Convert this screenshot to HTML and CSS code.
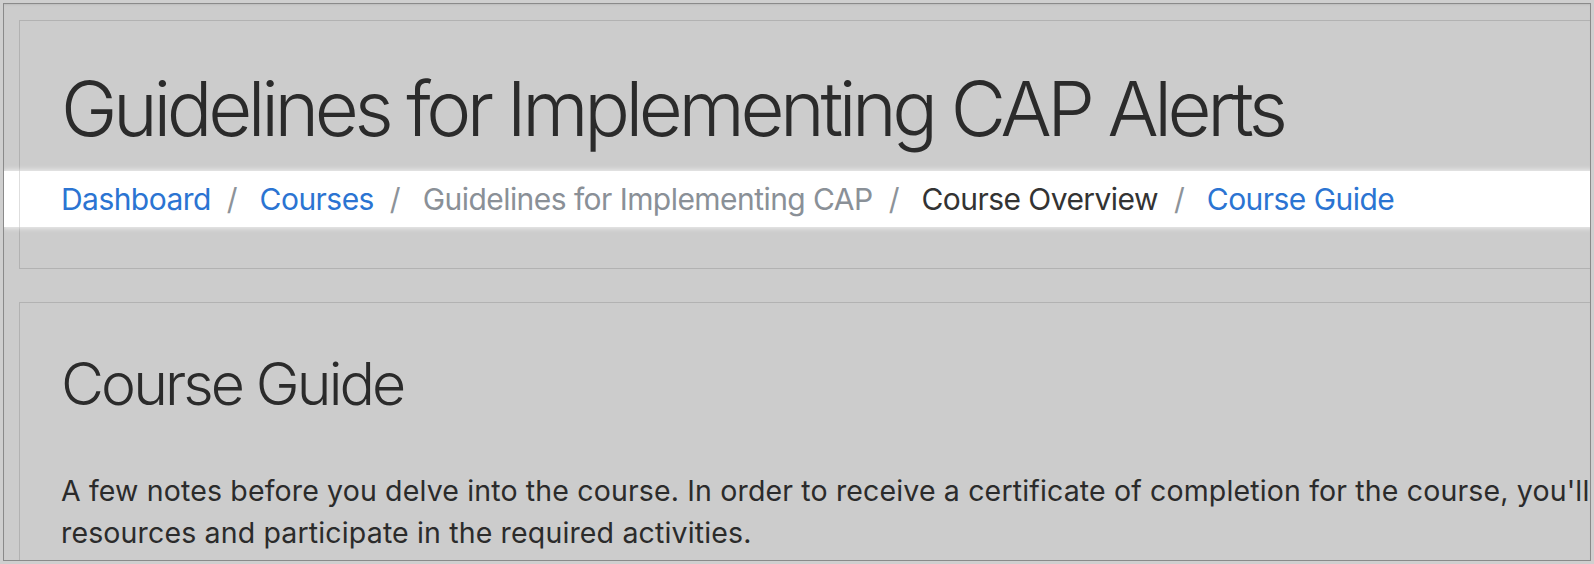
FILE: index.html
```html
<!DOCTYPE html>
<html lang="en">
<head>
<meta charset="utf-8">
<title>Course Guide</title>
<link rel="stylesheet" href="styles.css">
</head>
<body>
<div class="frame">
  <header class="card card-header">
    <h1 class="page-title">Guidelines for Implementing CAP Alerts</h1>
    <nav class="crumbs">
      <a class="crumb link" href="#">Dashboard</a><span class="sep">/</span>
      <a class="crumb link" href="#">Courses</a><span class="sep">/</span>
      <span class="crumb muted">Guidelines for Implementing CAP</span><span class="sep">/</span>
      <span class="crumb dark">Course Overview</span><span class="sep">/</span>
      <a class="crumb link" href="#">Course Guide</a>
    </nav>
  </header>
  <main class="card card-main">
    <h2 class="section-title">Course Guide</h2>
    <p class="intro">A few notes before you delve into the course. In order to receive a certificate of completion for the course, you'll<br>resources and participate in the required activities.</p>
  </main>
</div>
</body>
</html>
```
FILE: styles.css
```css
html, body { margin: 0; padding: 0; }
body {
  background: #cfcfcf;
  font-family: Inter, "Noto Sans", sans-serif;
  color: #2b2b2b;
}
.frame {
  box-sizing: border-box;
  margin: 3px;
  height: 558px;
  border: 1px solid #8a8a8a;
  background: #cccccc;
  overflow: hidden;
  padding: 16px 0 0 15px;
  box-shadow: inset 0 2px 2px -1px rgba(0,0,0,0.08);
}
.card {
  border: 1px solid #b2b2b2;
  margin-right: -40px;
}
.card-header { padding: 39px 0 41px 41px; }
.page-title {
  margin: 0;
  font-size: 76px;
  line-height: 96px;
  letter-spacing: -4.4px;
  font-weight: 300;
  color: #2b2b2b;
  white-space: nowrap;
}
.crumbs {
  display: flex;
  align-items: center;
  margin: 15px 0 0 -57px;
  padding-left: 57px;
  height: 56px;
  line-height: 56px;
  font-size: 30px;
  letter-spacing: -0.55px;
  background: linear-gradient(to right, #fff 15px, #dedede 15px, #dedede 16px, #fff 16px);
  white-space: nowrap;
  box-shadow: 0 0 5px 1px rgba(255,255,255,0.7);
}
.crumb { text-decoration: none; }
.link { color: #2b74d2; }
.muted { color: #8a9097; }
.dark { color: #333; }
.sep { color: #8d9399; padding: 0 22px 0 16px; letter-spacing: 0; }
.card-main { margin-top: 33px; padding: 45px 0 0 41px; height: 400px; }
.section-title {
  margin: 0;
  font-size: 59px;
  line-height: 72px;
  letter-spacing: -2.9px;
  font-weight: 300;
  white-space: nowrap;
}
.intro {
  margin: 50px 0 0;
  font-size: 28.5px;
  line-height: 42px;
  letter-spacing: 0.15px;
  white-space: nowrap;
}
```
